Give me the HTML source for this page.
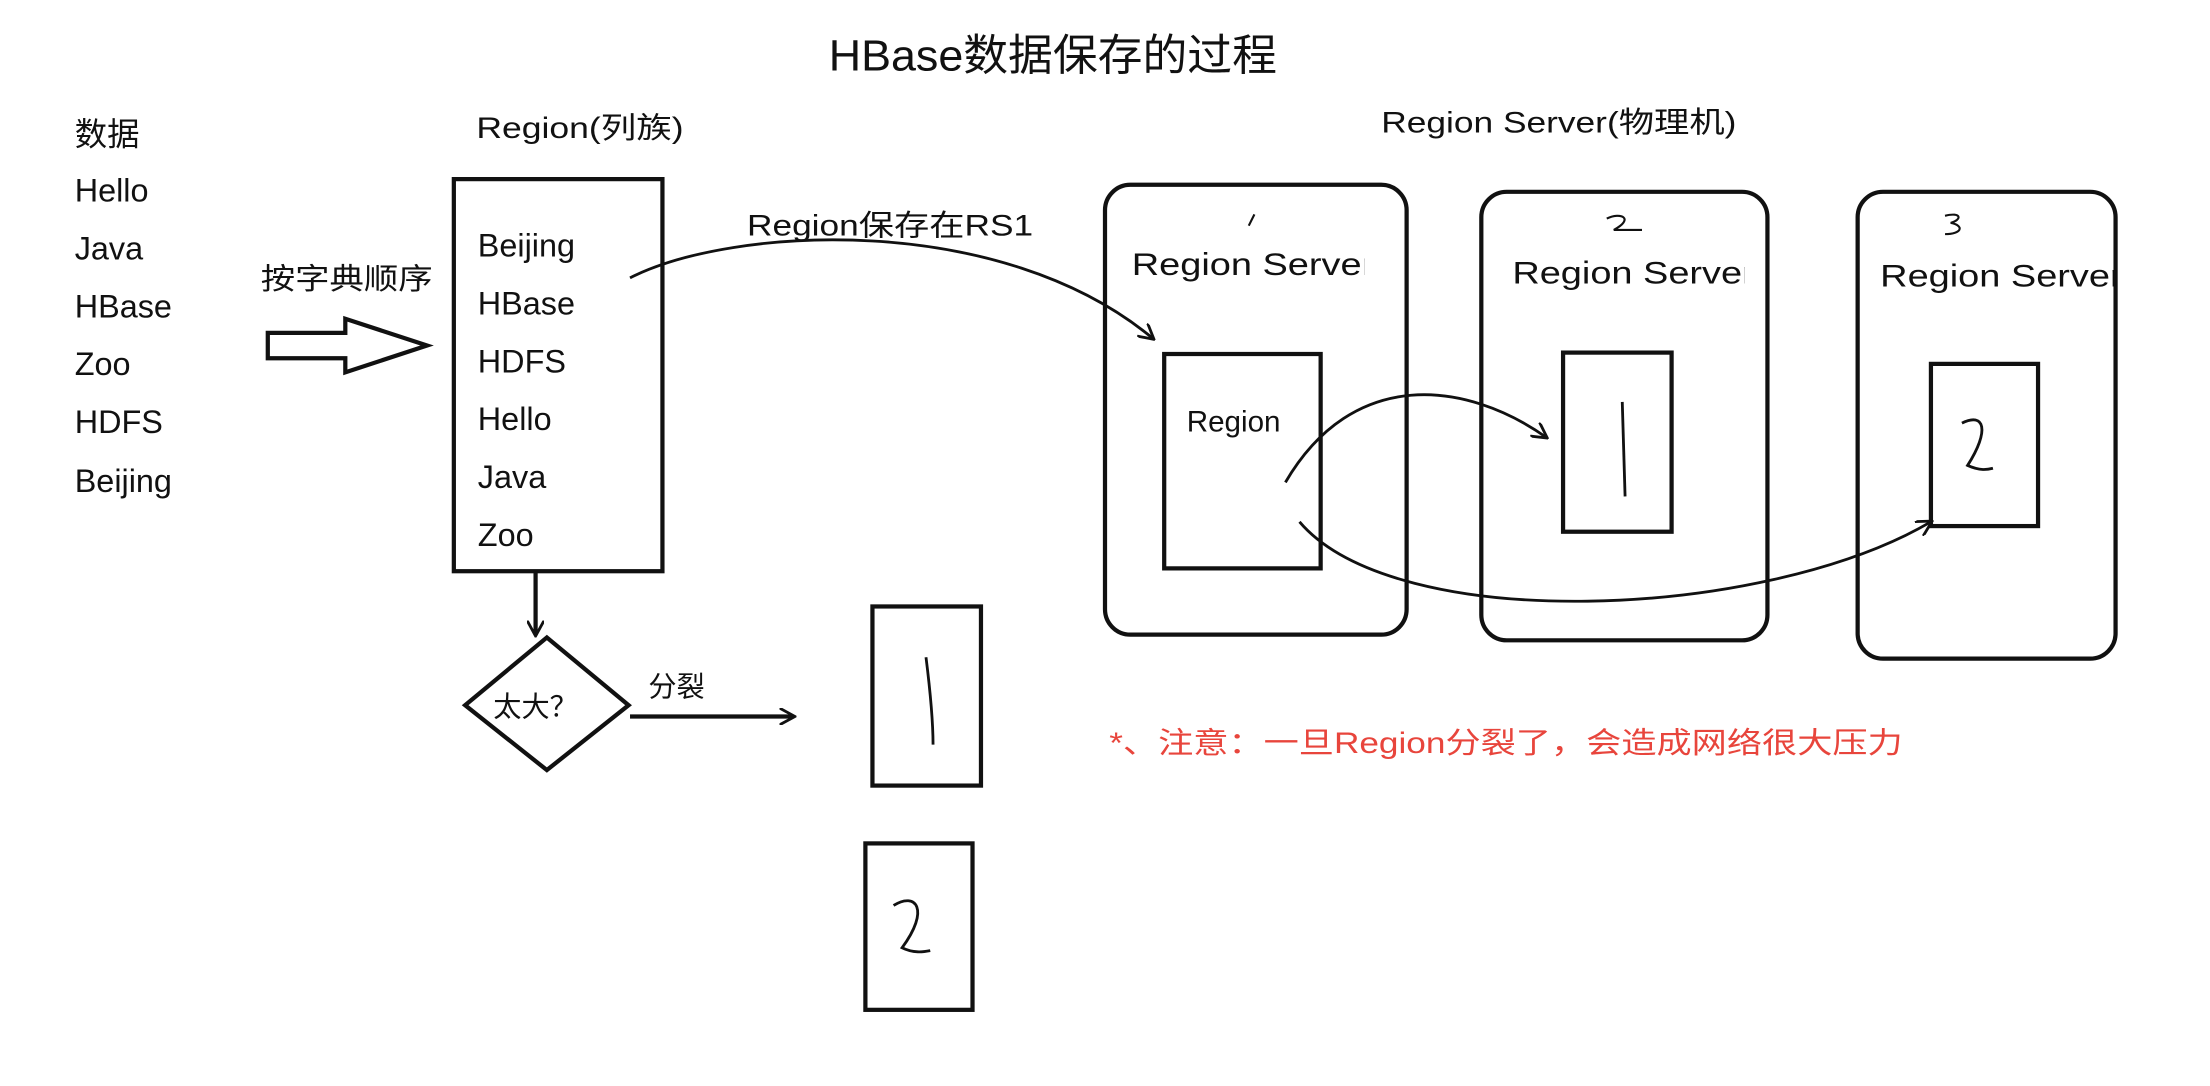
<!DOCTYPE html>
<html><head><meta charset="utf-8"><style>
html,body{margin:0;padding:0;background:#fff;width:2210px;height:1086px;overflow:hidden}
svg text{font-family:"Liberation Sans","Noto Sans CJK SC",sans-serif;fill:#111}
</style></head><body>
<svg width="2210" height="1086" viewBox="0 0 1568 770" preserveAspectRatio="none" xmlns="http://www.w3.org/2000/svg">
<defs>
<marker id="ah" markerWidth="12" markerHeight="12" refX="10" refY="6" orient="auto" markerUnits="userSpaceOnUse"><path d="M0,0 L11,6 L0,12" fill="none" stroke="#111" stroke-width="2"/></marker>
<clipPath id="c1"><rect x="784" y="131" width="184" height="300"/></clipPath>
<clipPath id="c2"><rect x="1051" y="136" width="187" height="300"/></clipPath>
<clipPath id="c3"><rect x="1318" y="136" width="183" height="300"/></clipPath>
</defs>
<text x="588" y="50" font-size="31" textLength="318" lengthAdjust="spacingAndGlyphs">HBase数据保存的过程</text>
<g font-size="23">
<text x="53" y="103">数据</text>
<text x="53" y="143">Hello</text>
<text x="53" y="184">Java</text>
<text x="53" y="225">HBase</text>
<text x="53" y="266">Zoo</text>
<text x="53" y="307">HDFS</text>
<text x="53" y="349">Beijing</text>
</g>
<text x="185" y="205" font-size="21" textLength="122" lengthAdjust="spacingAndGlyphs">按字典顺序</text>
<polygon points="190,236 245,236 245,226 303,245 245,264 245,254 190,254" fill="none" stroke="#111" stroke-width="3"/>
<text x="338" y="98" font-size="21" textLength="147" lengthAdjust="spacingAndGlyphs">Region(列族)</text>
<rect x="322" y="127" width="148" height="278" fill="none" stroke="#111" stroke-width="3"/>
<g font-size="23">
<text x="339" y="182">Beijing</text>
<text x="339" y="223">HBase</text>
<text x="339" y="264">HDFS</text>
<text x="339" y="305">Hello</text>
<text x="339" y="346">Java</text>
<text x="339" y="387">Zoo</text>
</g>
<line x1="380" y1="405" x2="380" y2="450" stroke="#111" stroke-width="3" marker-end="url(#ah)"/>
<polygon points="388,452 446,500 388,546 330,500" fill="none" stroke="#111" stroke-width="3"/>
<text x="350" y="508" font-size="20">太大？</text>
<text x="460" y="494" font-size="20">分裂</text>
<line x1="447" y1="508" x2="563" y2="508" stroke="#111" stroke-width="3" marker-end="url(#ah)"/>
<rect x="619" y="430" width="77" height="127" fill="none" stroke="#111" stroke-width="3"/>
<path d="M657,466 C660,490 662,510 662,528" stroke="#111" stroke-width="2" fill="none"/>
<rect x="614" y="598" width="76" height="118" fill="none" stroke="#111" stroke-width="3"/>
<path d="M634,642 C650,632 660,645 640,672 C648,676 655,675 660,674" stroke="#111" stroke-width="2" fill="none"/>
<text x="980" y="94" font-size="21" textLength="252" lengthAdjust="spacingAndGlyphs">Region Server(物理机)</text>
<text x="530" y="167" font-size="21" textLength="203" lengthAdjust="spacingAndGlyphs">Region保存在RS1</text>
<path d="M447,197 C520,160 710,150 818,240" stroke="#111" stroke-width="2" fill="none" marker-end="url(#ah)"/>
<rect x="784" y="131" width="214" height="319" rx="18" fill="none" stroke="#111" stroke-width="3"/>
<text x="803" y="195" font-size="22" clip-path="url(#c1)" textLength="172" lengthAdjust="spacingAndGlyphs">Region Server</text>
<path d="M886,160 L890,152" stroke="#111" stroke-width="1.5"/>
<rect x="826" y="251" width="111" height="152" fill="none" stroke="#111" stroke-width="3"/>
<text x="842" y="306" font-size="21">Region</text>
<rect x="1051" y="136" width="203" height="318" rx="18" fill="none" stroke="#111" stroke-width="3"/>
<text x="1073" y="201" font-size="22" clip-path="url(#c2)" textLength="172" lengthAdjust="spacingAndGlyphs">Region Server</text>
<path d="M1140,155 C1150,150 1160,155 1145,163 L1165,163" stroke="#111" stroke-width="1.5" fill="none"/>
<rect x="1109" y="250" width="77" height="127" fill="none" stroke="#111" stroke-width="3"/>
<path d="M1151,285 L1153,352" stroke="#111" stroke-width="2"/>
<rect x="1318" y="136" width="183" height="331" rx="18" fill="none" stroke="#111" stroke-width="3"/>
<text x="1334" y="203" font-size="22" clip-path="url(#c3)" textLength="172" lengthAdjust="spacingAndGlyphs">Region Server</text>
<path d="M1380,153 C1392,150 1392,156 1384,158 C1394,160 1392,166 1380,166" stroke="#111" stroke-width="1.5" fill="none"/>
<rect x="1370" y="258" width="76" height="115" fill="none" stroke="#111" stroke-width="3"/>
<path d="M1392,300 C1408,292 1412,305 1396,330 C1405,334 1410,333 1414,332" stroke="#111" stroke-width="2" fill="none"/>
<path d="M912,342 C960,260 1040,270 1097,310" stroke="#111" stroke-width="2" fill="none" marker-end="url(#ah)"/>
<path d="M922,370 C990,450 1250,440 1370,370" stroke="#111" stroke-width="2" fill="none" marker-end="url(#ah)"/>
<text x="787" y="534" font-size="21" style="fill:#e8453c" textLength="563" lengthAdjust="spacingAndGlyphs">*、注意：一旦Region分裂了，会造成网络很大压力</text>
</svg>
</body></html>
